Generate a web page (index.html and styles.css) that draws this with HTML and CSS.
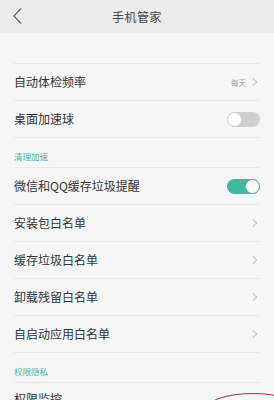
FILE: index.html
```html
<!DOCTYPE html>
<html lang="zh">
<head>
<meta charset="utf-8">
<link rel="stylesheet" href="styles.css">
</head>
<body>
<div class="page">
  <header class="topbar">
    <svg class="back" width="12" height="18" viewBox="0 0 12 18"><path d="M9 1.5 L2 9 L9 16.5" fill="none" stroke="#666" stroke-width="1.2"/></svg>
    <div class="title">手机管家</div>
  </header>
  <div class="spacer"></div>
  <div class="list">
    <div class="row"><span class="label">自动体检频率</span><span class="right"><span class="value">每天</span><span class="chev"></span></span></div>
    <div class="row"><span class="label">桌面加速球</span><span class="toggle off"><span class="knob"></span></span></div>
    <div class="section">清理加速</div>
    <div class="row"><span class="label">微信和QQ缓存垃圾提醒</span><span class="toggle on"><span class="knob"></span></span></div>
    <div class="row"><span class="label">安装包白名单</span><span class="chev"></span></div>
    <div class="row"><span class="label">缓存垃圾白名单</span><span class="chev"></span></div>
    <div class="row"><span class="label">卸载残留白名单</span><span class="chev"></span></div>
    <div class="row"><span class="label">自启动应用白名单</span><span class="chev"></span></div>
    <div class="section">权限隐私</div>
    <div class="row last"><span class="label">权限监控</span><span class="toggle on marked"><span class="knob"></span><span class="ring"></span></span></div>
  </div>
</div>
</body>
</html>
```
FILE: styles.css
```css
* { box-sizing: border-box; }
html, body { margin: 0; padding: 0; }
body {
  background: #f6f6f6;
  font-family: "Noto Sans CJK SC", "Noto Sans", sans-serif;
  color: #333;
  width: 274px;
  height: 400px;
  overflow: hidden;
}
.page { width: 274px; height: 400px; overflow: hidden; }
.topbar {
  height: 33px;
  background: #ececec;
  display: flex;
  align-items: center;
  justify-content: center;
  position: relative;
}
.back { position: absolute; left: 12px; top: 7px; }
.title { font-size: 12px; color: #444; letter-spacing: 0.5px; }
.spacer { height: 30px; }
.list { padding: 0 14px; }
.row {
  height: 37px;
  border-top: 1px solid #e9e9e9;
  display: flex;
  align-items: center;
  justify-content: space-between;
}
.label { font-size: 12px; color: #333; line-height: 1; }
.right { display: flex; align-items: center; gap: 4px; }
.value { font-size: 7.5px; color: #9a9a9a; }
.chev {
  width: 6px; height: 6px;
  border-top: 1px solid #c4c4c4;
  border-right: 1px solid #c4c4c4;
  transform: rotate(45deg);
  margin-right: 4px;
}
.section {
  height: 30px;
  border-top: 1px solid #e9e9e9;
  display: flex;
  align-items: flex-end;
  padding-bottom: 5px;
  font-size: 8.5px;
  color: #4db7a3;
}
.toggle {
  width: 33px; height: 15px;
  border-radius: 8px;
  position: relative;
}
.toggle.off { background: #cfcfcf; }
.toggle.on { background: #3dbb9e; }
.knob {
  position: absolute; top: 0;
  width: 15px; height: 15px;
  border-radius: 50%;
  background: #fff;
}
.toggle.off .knob { left: 0; border: 1px solid #cfcfcf; }
.toggle.on .knob { right: 0; border: 1px solid #3dbb9e; }
.row.last { align-items: flex-start; padding-top: 10px; }
.toggle.marked { margin-top: 7px; }
.ring {
  position: absolute;
  left: -22px; top: -7px;
  width: 96px; height: 34px;
  border: 1px solid #9c3b4c;
  border-radius: 50%;
}
```
